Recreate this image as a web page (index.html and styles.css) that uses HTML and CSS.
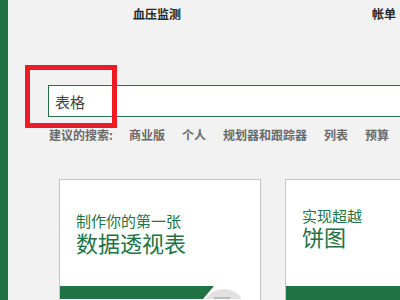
FILE: index.html
```html
<!DOCTYPE html>
<html lang="zh-CN">
<head>
    <meta charset="UTF-8">
    <title>新建 - 表格</title>
    <link rel="stylesheet" href="styles.css">
</head>
<body>
    <div class="sidebar"></div>
    <div class="main">
        <div class="tabs">
            <span class="tab tab-first">血压监测</span>
            <span class="tab tab-second">帐单</span>
        </div>

        <div class="search-area">
            <div class="search-box">表格</div>
            <div class="highlight"></div>
        </div>

        <div class="suggest">
            <span class="suggest-label">建议的搜索:</span>
            <span>商业版</span>
            <span>个人</span>
            <span>规划器和跟踪器</span>
            <span>列表</span>
            <span>预算</span>
        </div>

        <div class="cards">
            <div class="card">
                <div class="card-text">
                    <div class="card-small">制作你的第一张</div>
                    <div class="card-big">数据透视表</div>
                </div>
                <div class="card-band card-band-cut">
                    <svg class="band-pic" width="200" height="13" viewBox="0 0 200 13">
                        <polygon points="0,0 154,0 143,13 0,13" fill="#217346"/>
                        <circle cx="164" cy="24" r="21" fill="#e1e1e1"/>
                        <rect x="154" y="11" width="16" height="6" fill="#bdbdbd"/>
                    </svg>
                </div>
            </div>
            <div class="card card-second">
                <div class="card-text">
                    <div class="card-small">实现超越</div>
                    <div class="card-big">饼图</div>
                </div>
                <div class="card-band"></div>
            </div>
        </div>
    </div>
</body>
</html>
```

FILE: styles.css
```css
html, body {
    overflow: hidden;
}
body {
    margin: 0;
    display: flex;
    height: 300px;
    background: #f2f2f2;
    font-family: "Noto Sans CJK SC", "Liberation Sans", sans-serif;
}
.sidebar {
    width: 8px;
    flex-shrink: 0;
    background: #217346;
}
.main {
    flex: 1;
    min-width: 0;
    overflow: hidden;
}
.tabs {
    display: flex;
    height: 28px;
    padding-top: 5px;
    box-sizing: border-box;
    font-size: 12px;
    line-height: 17px;
    font-weight: bold;
    color: #262626;
}
.tab-first {
    margin-left: 125px;
}
.tab-second {
    margin-left: 191px;
    white-space: nowrap;
}
.search-area {
    position: relative;
    margin-top: 57px;
    margin-left: 40px;
}
.search-box {
    height: 30px;
    padding-left: 6px;
    border: 1px solid #217346;
    border-right: none;
    background: white;
    font-size: 15px;
    line-height: 32px;
    color: #444;
}
.highlight {
    position: absolute;
    left: -23px;
    top: -20px;
    width: 82px;
    height: 53px;
    border: 5px solid #ed1c24;
}
.suggest {
    display: flex;
    gap: 17px;
    margin-top: 9px;
    margin-left: 41px;
    font-size: 12px;
    line-height: 17px;
    font-weight: bold;
    color: #6a6a6a;
    white-space: nowrap;
}
.suggest-label {
    margin-right: -1px;
}
.cards {
    display: flex;
    gap: 24px;
    margin-top: 36px;
    margin-left: 51px;
}
.card {
    flex-shrink: 0;
    width: 200px;
    height: 140px;
    border: 1px solid #c6c6c6;
    background: white;
    display: flex;
    flex-direction: column;
}
.card-text {
    height: 106px;
    padding-left: 16px;
    padding-top: 33px;
    box-sizing: border-box;
    color: #217346;
}
.card-small {
    font-size: 15px;
    line-height: 15px;
}
.card-big {
    margin-top: 3px;
    font-size: 22px;
    line-height: 22px;
}
.card-second .card-text {
    padding-top: 28px;
}
.card-second .card-big {
    margin-top: 2px;
}
.card-band {
    flex: 1;
    background: #217346;
}
.card-band-cut {
    background: white;
    overflow: hidden;
}
.band-pic {
    display: block;
}
```
